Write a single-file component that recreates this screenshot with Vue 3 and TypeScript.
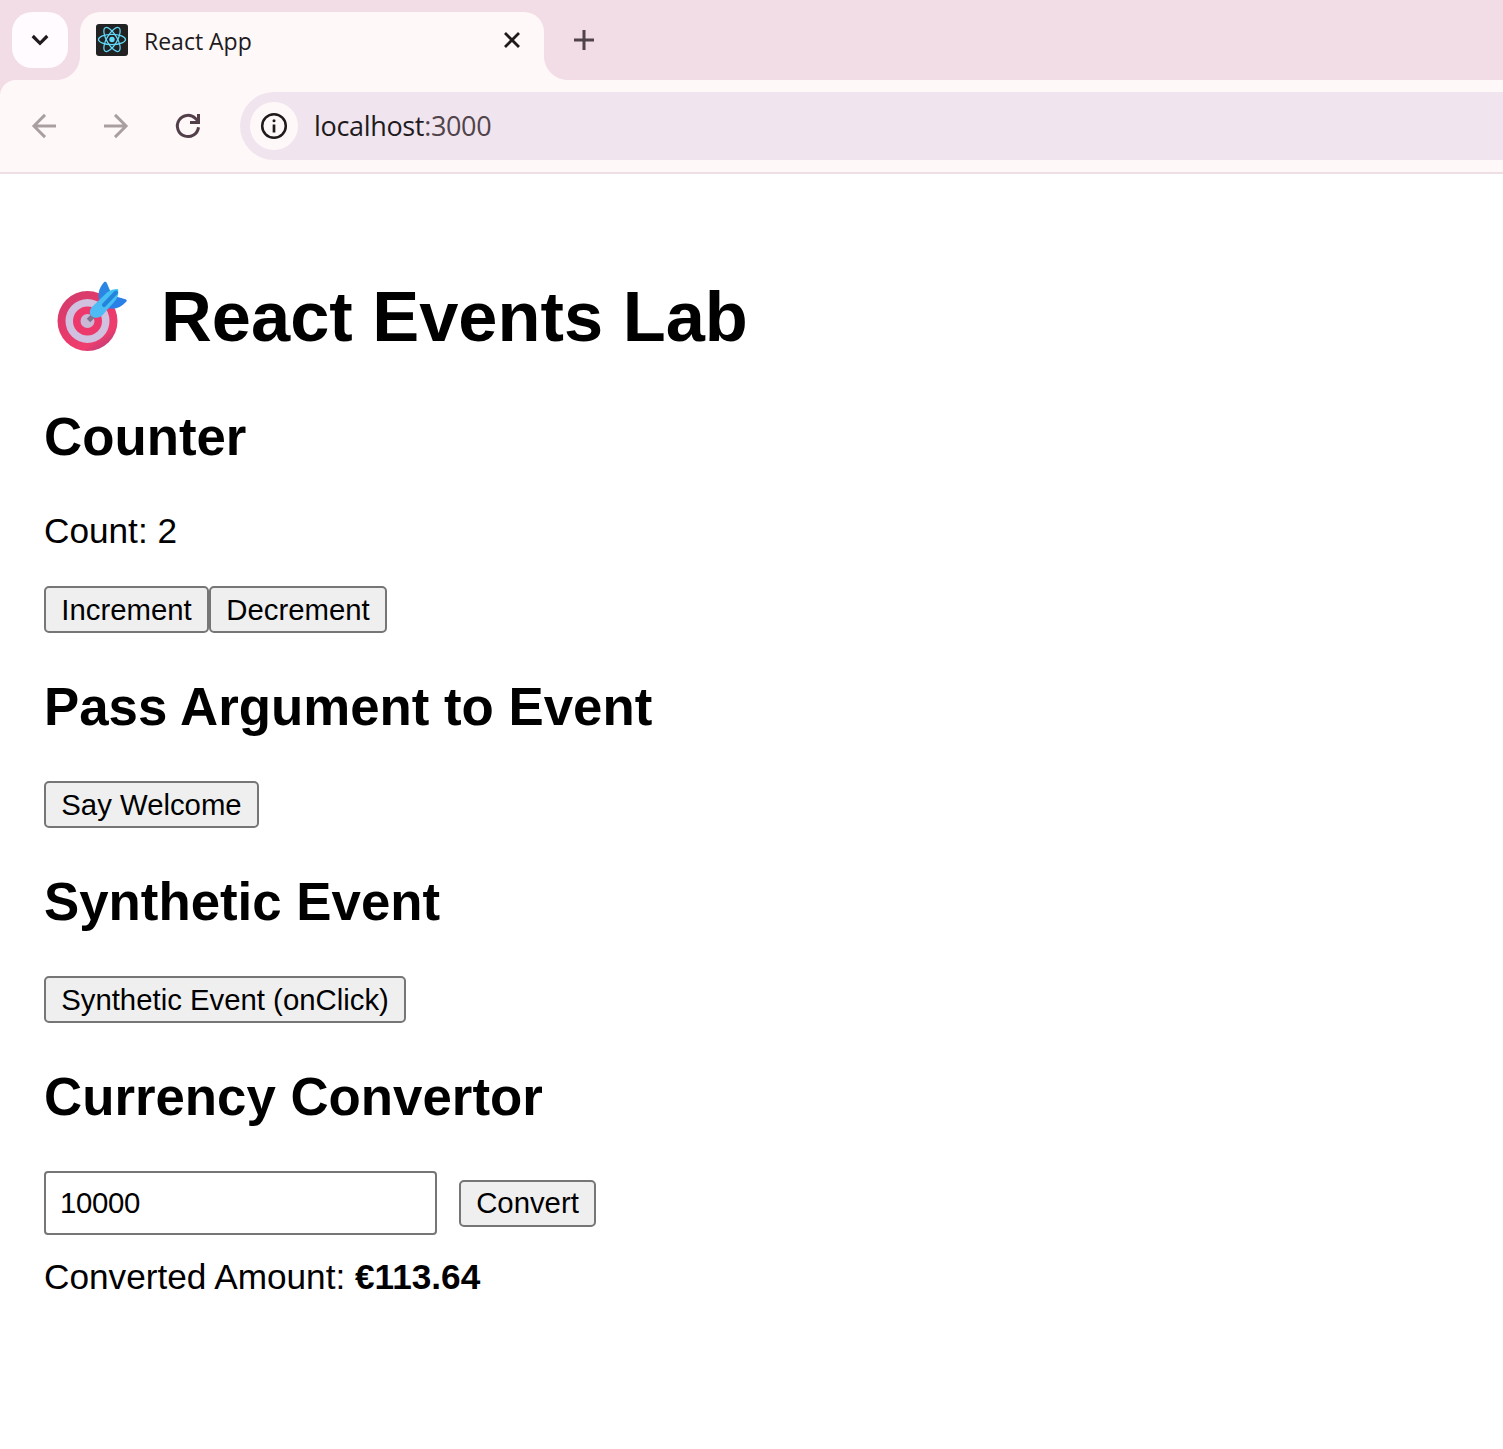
<script setup lang="ts">
import { computed, ref } from 'vue'

const RUPEES_PER_EURO = 88

const count = ref<number>(2)
const rupees = ref<string>('10000')
const converted = ref<string>((Number(rupees.value) / RUPEES_PER_EURO).toFixed(2))
const amountLabel = computed<string>(() => `€${converted.value}`)

function convert(): void {
  converted.value = (Number(rupees.value) / RUPEES_PER_EURO).toFixed(2)
}
</script>

<template>
  <div class="window">
    <header class="tab-strip">
      <div class="tab-search">
        <svg width="56" height="56" viewBox="0 0 56 56" fill="none">
          <path d="M20.700 24 28 31.300l7.300-7.300" stroke="#211a1d" stroke-width="3.200" />
        </svg>
      </div>
      <div class="tab">
        <svg class="favicon" width="32" height="32" viewBox="0 0 32 32" fill="none">
          <rect width="32" height="32" rx="3" fill="#222" />
          <g stroke="#61dafb" stroke-width="1.250">
            <ellipse cx="16" cy="15.500" rx="13.500" ry="5.200" />
            <ellipse cx="16" cy="15.500" rx="13.500" ry="5.200" transform="rotate(60 16 15.500)" />
            <ellipse cx="16" cy="15.500" rx="13.500" ry="5.200" transform="rotate(120 16 15.500)" />
          </g>
          <circle cx="16" cy="15.500" r="2.700" fill="#61dafb" />
        </svg>
        <span class="tab-title">React App</span>
        <svg class="tab-close" width="32" height="32" viewBox="0 0 32 32" fill="none">
          <path d="m9 9 14 14M23 9 9 23" stroke="#211a1d" stroke-width="2.800" />
        </svg>
      </div>
      <svg class="new-tab" width="32" height="32" viewBox="0 0 32 32" fill="none">
        <path d="M16 6v20M6 16h20" stroke="#51434a" stroke-width="3" />
      </svg>
    </header>

    <nav class="toolbar">
      <svg class="nav-icon" width="32" height="32" viewBox="0 0 32 32" fill="none">
        <path d="M28 16H6M17 4.900 5.900 16 17 27.100" stroke="#a99fa2" stroke-width="2.900" />
      </svg>
      <svg class="nav-icon" width="32" height="32" viewBox="0 0 32 32" fill="none">
        <path d="M4 16h22M15 4.900 26.100 16 15 27.100" stroke="#a99fa2" stroke-width="2.900" />
      </svg>
      <svg class="nav-icon" width="32" height="32" viewBox="0 0 32 32" fill="none">
        <path d="M26.500 17.200A10.600 10.600 0 1 1 23.500 8.500L27 12" stroke="#523f4a" stroke-width="3" />
        <path d="M28 4v10H18v-3h7V4z" fill="#523f4a" />
      </svg>
      <div class="address">
        <span class="site-info">
          <svg width="48" height="48" viewBox="0 0 48 48" fill="none">
            <circle cx="24" cy="24" r="11.800" stroke="#211a1d" stroke-width="2.500" />
            <path d="M24 22.500v8" stroke="#211a1d" stroke-width="2.700" />
            <circle cx="24" cy="18.800" r="1.500" fill="#211a1d" />
          </svg>
        </span>
        <span class="url">localhost<span class="port">:3000</span></span>
      </div>
    </nav>

    <main class="page">
      <h1>
        <svg class="target" width="72" height="72" viewBox="0 0 72 72">
          <defs>
            <linearGradient id="ring" x1="0" y1="0" x2="0.700" y2="1">
              <stop offset="0" stop-color="#cf3c6c" />
              <stop offset="0.500" stop-color="#e53a6b" />
              <stop offset="0.850" stop-color="#ef3d6e" />
              <stop offset="1" stop-color="#c53c77" />
            </linearGradient>
            <linearGradient id="shaft" x1="0" y1="1" x2="1" y2="0">
              <stop offset="0" stop-color="#52b9f4" />
              <stop offset="1" stop-color="#3fc2f4" />
            </linearGradient>
          </defs>
          <circle cx="31.500" cy="40" r="30" fill="url(#ring)" />
          <circle cx="31.500" cy="40" r="22" fill="#cfc1df" />
          <circle cx="31.500" cy="40" r="14.500" fill="#ed386b" />
          <circle cx="31.500" cy="40" r="7" fill="#c9b8d6" />
          <path d="m32.500 39.500 6-6" stroke="#82708c" stroke-width="5" />
          <path d="M43.500 20C41 11 44 6 48 1.200c1-.9 2.200-.4 2.800.8L56 14z" fill="#2b86e3" />
          <path d="m58 15 11.500 3.200c1.300.3 1.700 1.600.7 2.600-6 6.500-12 8.500-19 6z" fill="#2b80e8" />
          <path d="M36 26 51 11.500c3-2.500 7-3.500 11-3.500 1 6-1 10-3.500 12.500L47 33.500c-3 3.500-8 4.500-11.500 1.500-2.500-2-2-6.500.5-9z" fill="url(#shaft)" />
          <path d="M48 24 60 11.500" stroke="#2484dc" stroke-width="4" stroke-linecap="round" />
        </svg>
        <span>React Events Lab</span>
      </h1>

      <h2>Counter</h2>
      <p class="count">Count: {{ count }}</p>
      <div class="row">
        <button class="increment" @click="count++">Increment</button>
        <button class="decrement" @click="count--">Decrement</button>
      </div>

      <h2>Pass Argument to Event</h2>
      <div class="row"><button class="welcome">Say Welcome</button></div>

      <h2>Synthetic Event</h2>
      <div class="row"><button class="synthetic">Synthetic Event (onClick)</button></div>

      <h2>Currency Convertor</h2>
      <div class="row">
        <input v-model="rupees" type="text" />
        <button class="convert" @click="convert">Convert</button>
      </div>
      <p class="result">Converted Amount: <strong>{{ amountLabel }}</strong></p>
    </main>
  </div>
</template>

<style>
body {
  background: #fff;
}
</style>

<style scoped>
.window {
  height: 1449px;
  overflow: hidden;
  background: #fff;
  color: #000;
  font-family: 'Liberation Sans', Arial, sans-serif;
  font-size: 35.2px;
}
svg {
  display: block;
  flex: none;
}
.tab-strip {
  display: flex;
  height: 80px;
  padding: 12px 0 0 12px;
  box-sizing: border-box;
  background: #f2dce5;
}
.tab-search {
  width: 56px;
  height: 56px;
  border-radius: 20px;
  background: #fffbff;
}
.tab {
  position: relative;
  display: flex;
  width: 464px;
  height: 68px;
  margin-left: 12px;
  padding: 12px 16px 0;
  box-sizing: border-box;
  border-radius: 20px 20px 0 0;
  background: #fff8f8;
}
.tab::before,
.tab::after {
  content: '';
  position: absolute;
  bottom: 0;
  width: 24px;
  height: 24px;
}
.tab::before {
  right: 100%;
  background: radial-gradient(circle at 0 0, transparent 23.5px, #fff8f8 24.5px);
}
.tab::after {
  left: 100%;
  background: radial-gradient(circle at 100% 0, transparent 23.5px, #fff8f8 24.5px);
}
.tab-title {
  flex: 1;
  margin-left: 16px;
  font: 23px/35px 'Open Sans', 'Noto Sans', sans-serif;
  letter-spacing: 0;
  color: #211a1d;
}
.new-tab {
  margin: 12px 0 0 24px;
}
.toolbar {
  display: flex;
  align-items: center;
  height: 94px;
  box-sizing: border-box;
  padding-left: 28px;
  border-bottom: 2px solid #f0dee5;
  background: radial-gradient(circle at 16px 16px, #fff8f8 15.5px, #f2dce5 16.5px) 0 0 / 16px 16px no-repeat, #fff8f8;
}
.nav-icon {
  margin-right: 40px;
}
.address {
  display: flex;
  align-items: center;
  flex: 1;
  height: 68px;
  margin-left: -4px;
  padding-left: 10px;
  box-sizing: border-box;
  border-radius: 34px 0 0 34px;
  background: #f0e4ee;
}
.site-info {
  width: 48px;
  height: 48px;
  border-radius: 50%;
  background: #fff8f8;
}
.url {
  margin-left: 16px;
  font: 27px/40px 'Open Sans', 'Noto Sans', sans-serif;
  letter-spacing: -0.33px;
  color: #211a1d;
}
.port {
  color: #51434a;
}
.page {
  padding: 92px 44px 0;
}
h1 {
  display: flex;
  height: 97px;
  margin: 0;
  font-size: 70.4px;
  line-height: 101px;
}
.target {
  margin: 15px 33px 0 12px;
}
h2 {
  margin: 44px 0;
  font-size: 52.8px;
  line-height: 60px;
}
p {
  margin: 0;
  line-height: 40px;
}
.count {
  margin-bottom: 35px;
}
.row {
  display: flex;
  align-items: center;
}
button {
  height: 47px;
  padding: 0;
  border: 2px solid #767676;
  border-radius: 5px;
  background: #efefef;
  color: #000;
  font: 29.333px/43px 'Liberation Sans', Arial, sans-serif;
}
.increment {
  width: 165px;
}
.decrement {
  width: 178px;
}
.welcome {
  width: 215px;
}
.synthetic {
  width: 362px;
}
.convert {
  width: 137px;
  margin-left: 22px;
  line-height: 41px;
  padding-bottom: 2px;
}
input {
  width: 393px;
  height: 64px;
  padding: 0 14px;
  box-sizing: border-box;
  border: 2px solid #767676;
  border-radius: 4px;
  background: #fff;
  color: #000;
  font: 29.333px 'Liberation Sans', Arial, sans-serif;
  letter-spacing: -0.3px;
}
.result {
  margin-top: 22px;
}
</style>
